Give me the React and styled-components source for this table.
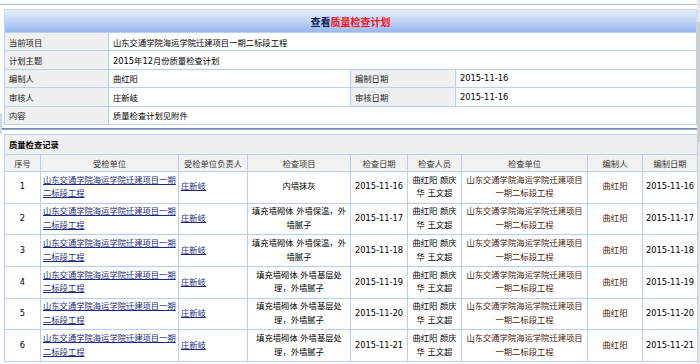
import React from "react";
import styled, { createGlobalStyle } from "styled-components";

const GlobalStyle = createGlobalStyle`
  body {
    margin: 0;
    background: #fff;
    font-family: "DejaVu Sans", "Noto Sans CJK SC", sans-serif;
    font-size: 8.3px;
    color: #111;
  }
`;

const info = [
  { label: "当前项目", value: "山东交通学院海运学院迁建项目一期二标段工程" },
  { label: "计划主题", value: "2015年12月份质量检查计划" },
  { label: "编制人", value: "曲红阳", label2: "编制日期", value2: "2015-11-16" },
  { label: "审核人", value: "庄新岐", label2: "审核日期", value2: "2015-11-16" },
  { label: "内容", value: "质量检查计划见附件" },
];

const unit = "山东交通学院海运学院迁建项目一期二标段工程";
const itemA = "填充墙砌体 外墙保温，外墙腻子";
const itemB = "填充墙砌体 外墙基层处理，外墙腻子";

const records = [
  { no: 1, item: "内墙抹灰", date: "2015-11-16" },
  { no: 2, item: itemA, date: "2015-11-17" },
  { no: 3, item: itemA, date: "2015-11-18" },
  { no: 4, item: itemB, date: "2015-11-19" },
  { no: 5, item: itemB, date: "2015-11-20" },
  { no: 6, item: itemB, date: "2015-11-21" },
];

const columns = [
  { title: "序号", width: 36 },
  { title: "受检单位", width: 138 },
  { title: "受检单位负责人", width: 69 },
  { title: "检查项目", width: 103 },
  { title: "检查日期", width: 57 },
  { title: "检查人员", width: 54 },
  { title: "检查单位", width: 126 },
  { title: "编制人", width: 55 },
  { title: "编制日期", width: 55 },
];

function App() {
  return (
    <>
      <GlobalStyle />
      <Page>
        <Main>
          <TopRule />
          <Panel>
            <TitleBar>
              <Title>
                查看<em>质量检查计划</em>
              </Title>
            </TitleBar>
            <InfoTable>
              <colgroup>
                <col style={{ width: 104 }} />
                <col style={{ width: 242 }} />
                <col style={{ width: 105 }} />
                <col />
              </colgroup>
              <tbody>
                {info.map((row) => (
                  <tr key={row.label}>
                    <Label>{row.label}</Label>
                    {row.label2 ? (
                      <>
                        <Value>{row.value}</Value>
                        <Label>{row.label2}</Label>
                        <Value>{row.value2}</Value>
                      </>
                    ) : (
                      <Value colSpan={3}>{row.value}</Value>
                    )}
                  </tr>
                ))}
              </tbody>
            </InfoTable>
          </Panel>
          <Divider />
          <Panel>
            <RecordTable>
              <colgroup>
                {columns.map((c) => (
                  <col key={c.title} style={{ width: c.width }} />
                ))}
              </colgroup>
              <thead>
                <tr>
                  <SectionCell colSpan={columns.length}>质量检查记录</SectionCell>
                </tr>
                <tr>
                  {columns.map((c) => (
                    <HeadCell key={c.title}>{c.title}</HeadCell>
                  ))}
                </tr>
              </thead>
              <tbody>
                {records.map((r) => (
                  <tr key={r.no}>
                    <Cell>{r.no}</Cell>
                    <Cell $left>
                      <Link>{unit}</Link>
                    </Cell>
                    <Cell $left>
                      <Link>庄新岐</Link>
                    </Cell>
                    <Cell>{r.item}</Cell>
                    <Cell>{r.date}</Cell>
                    <Cell>曲红阳 颜庆华 王文超</Cell>
                    <Cell $brown>{unit}</Cell>
                    <Cell $brown>曲红阳</Cell>
                    <Cell>{r.date}</Cell>
                  </tr>
                ))}
              </tbody>
            </RecordTable>
          </Panel>
          <Handle />
        </Main>
        <Scrollbar>
          <Thumb />
        </Scrollbar>
      </Page>
    </>
  );
}

const Page = styled.div`
  display: flex;
  height: 364px;
  overflow: hidden;
`;

const Main = styled.div`
  flex: 1;
  position: relative;
  min-width: 0;
`;

const TopRule = styled.div`
  margin-top: 4px;
  height: 1px;
  background: #aeb8d2;
`;

const Panel = styled.div`
  margin: 4px 0 0 4px;
`;

const TitleBar = styled.div`
  height: 23px;
  display: flex;
  align-items: center;
  justify-content: center;
  background: linear-gradient(#e6eefd, #c4d6f8 45%, #99b8ef);
  border: 1px solid #c6d6f6;
  border-bottom: none;
  box-sizing: border-box;
`;

const Title = styled.div`
  font-size: 10px;
  font-weight: bold;
  color: #0c1a56;
  em {
    font-style: normal;
    color: #ff1010;
  }
`;

const InfoTable = styled.table`
  width: 100%;
  border-collapse: collapse;
  table-layout: fixed;
  td {
    border: 1px solid #b9cdf6;
    height: 17.4px;
    padding: 0 4px;
    vertical-align: middle;
    white-space: nowrap;
  }
`;

const Label = styled.td`
  background: #f0f0f0;
  color: #1a1a1a;
`;

const Value = styled.td`
  background: #fff;
  color: #000;
`;

const Divider = styled.div`
  margin-top: 3px;
  height: 2px;
  background: linear-gradient(#6d7ea6, #a6b2cf);
`;

const RecordTable = styled.table`
  width: 100%;
  border-collapse: collapse;
  table-layout: fixed;
  margin-top: 3px;
  th,
  td {
    border: 1px solid #b9cdf6;
  }
`;

const SectionCell = styled.th`
  background: #f0f0f0;
  text-align: left;
  font-weight: bold;
  padding: 0 4px;
  height: 19px;
  color: #000;
`;

const HeadCell = styled.th`
  background: #f2f2f2;
  font-weight: normal;
  color: #333;
  height: 16px;
  padding: 0 2px;
  white-space: nowrap;
`;

const Cell = styled.td`
  height: 30.7px;
  padding: 0 2px;
  line-height: 13.7px;
  text-align: ${(p) => (p.$left ? "left" : "center")};
  color: ${(p) => (p.$brown ? "#4a200c" : "#000")};
  vertical-align: middle;
  line-break: strict;
`;

const Link = styled.span`
  color: #1b2a80;
  text-decoration: underline;
`;

const Handle = styled.div`
  position: absolute;
  left: -2px;
  top: 113px;
  width: 4px;
  height: 21px;
  border-radius: 2px;
  background: #c8d8f4;
`;

const Scrollbar = styled.div`
  width: 3px;
  background: #e6e6e6;
  padding-top: 22px;
`;

const Thumb = styled.div`
  height: 120px;
  background: #cdcdcd;
`;

export default App;
